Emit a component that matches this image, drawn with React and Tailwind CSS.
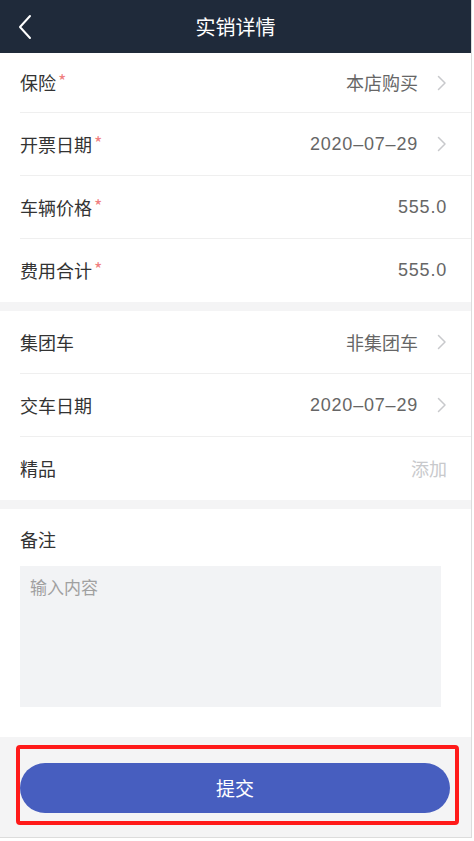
import React from "react";

const font = { fontFamily: '"Noto Sans CJK SC", "Noto Sans", sans-serif' };
const numFont = { fontFamily: '"Liberation Sans", "Noto Sans CJK SC", sans-serif' };

function Chevron() {
  return (
    <svg width="10" height="16" viewBox="0 0 10 16" className="ml-[19px] shrink-0">
      <path d="M1.5 1.5 L8 8 L1.5 14.5" fill="none" stroke="#c8c9cc" strokeWidth="1.5" strokeLinecap="round" strokeLinejoin="round" />
    </svg>
  );
}

function Row({ label, required, value, arrow, placeholder, numeric, last, h = "h-[63px]" }) {
  return (
    <div className={`${h} flex items-center pl-[20px]`}>
      <div className={`flex h-full flex-1 items-center pr-[24px] ${last ? "" : "border-b border-[#efefef]"}`}>
        <span className="text-[18px] text-[#333]">{label}</span>
        {required && <span className="ml-[2px] text-[18px] text-[#f08080] relative top-[-2px]">*</span>}
        <div className="ml-auto flex items-center">
          <span
            className={`text-[18px] ${numeric ? "tracking-[0.8px]" : ""} ${placeholder ? "text-[#c8c9cc]" : "text-[#666]"}`}
            style={numeric ? numFont : undefined}
          >
            {value}
          </span>
          {arrow && <Chevron />}
        </div>
      </div>
    </div>
  );
}

export default function App() {
  return (
    <div className="w-[472px] min-h-[841px] bg-white" style={font}>
      <div className="w-[472px] border-r border-[#dcdcdc] bg-[#f4f4f5]">
        <div className="relative flex h-[53px] items-center justify-center bg-[#1f2a3a]">
          <svg width="16" height="26" viewBox="0 0 16 26" className="absolute left-[17px] top-[14px]">
            <path d="M13 2 L3 13 L13 24" fill="none" stroke="#fff" strokeWidth="2" strokeLinecap="round" strokeLinejoin="round" />
          </svg>
          <span className="text-[20px] text-white">实销详情</span>
        </div>

        <div className="bg-white">
          <Row label="保险" required value="本店购买" arrow h="h-[60px]" />
          <Row label="开票日期" required value="2020–07–29" numeric arrow />
          <Row label="车辆价格" required value="555.0" numeric />
          <Row label="费用合计" required value="555.0" numeric last />
        </div>

        <div className="mt-[9px] bg-white">
          <Row label="集团车" value="非集团车" arrow />
          <Row label="交车日期" value="2020–07–29" numeric arrow />
          <Row label="精品" value="添加" placeholder last />
        </div>

        <div className="mt-[9px] bg-white pl-[20px] pr-[30px] pt-[16px] pb-[30px]">
          <div className="text-[18px] leading-[28px] text-[#333]">备注</div>
          <div className="mt-[13px] h-[141px] bg-[#f2f3f5] px-[10px] pt-[8px] text-[17px] text-[#a0a0a0]">输入内容</div>
        </div>

        <div className="relative h-[101px] border-b border-[#dcdcdc] pt-[26px] pl-[20px] pr-[21px]">
          <div className="flex h-[50px] items-center justify-center rounded-full bg-[#475ebf] text-[19px] text-white">提交</div>
          <div className="pointer-events-none absolute left-[16px] top-[8px] h-[80px] w-[443px] rounded-[4px] border-[4px] border-[#ff1a1a]" />
        </div>
      </div>
    </div>
  );
}
